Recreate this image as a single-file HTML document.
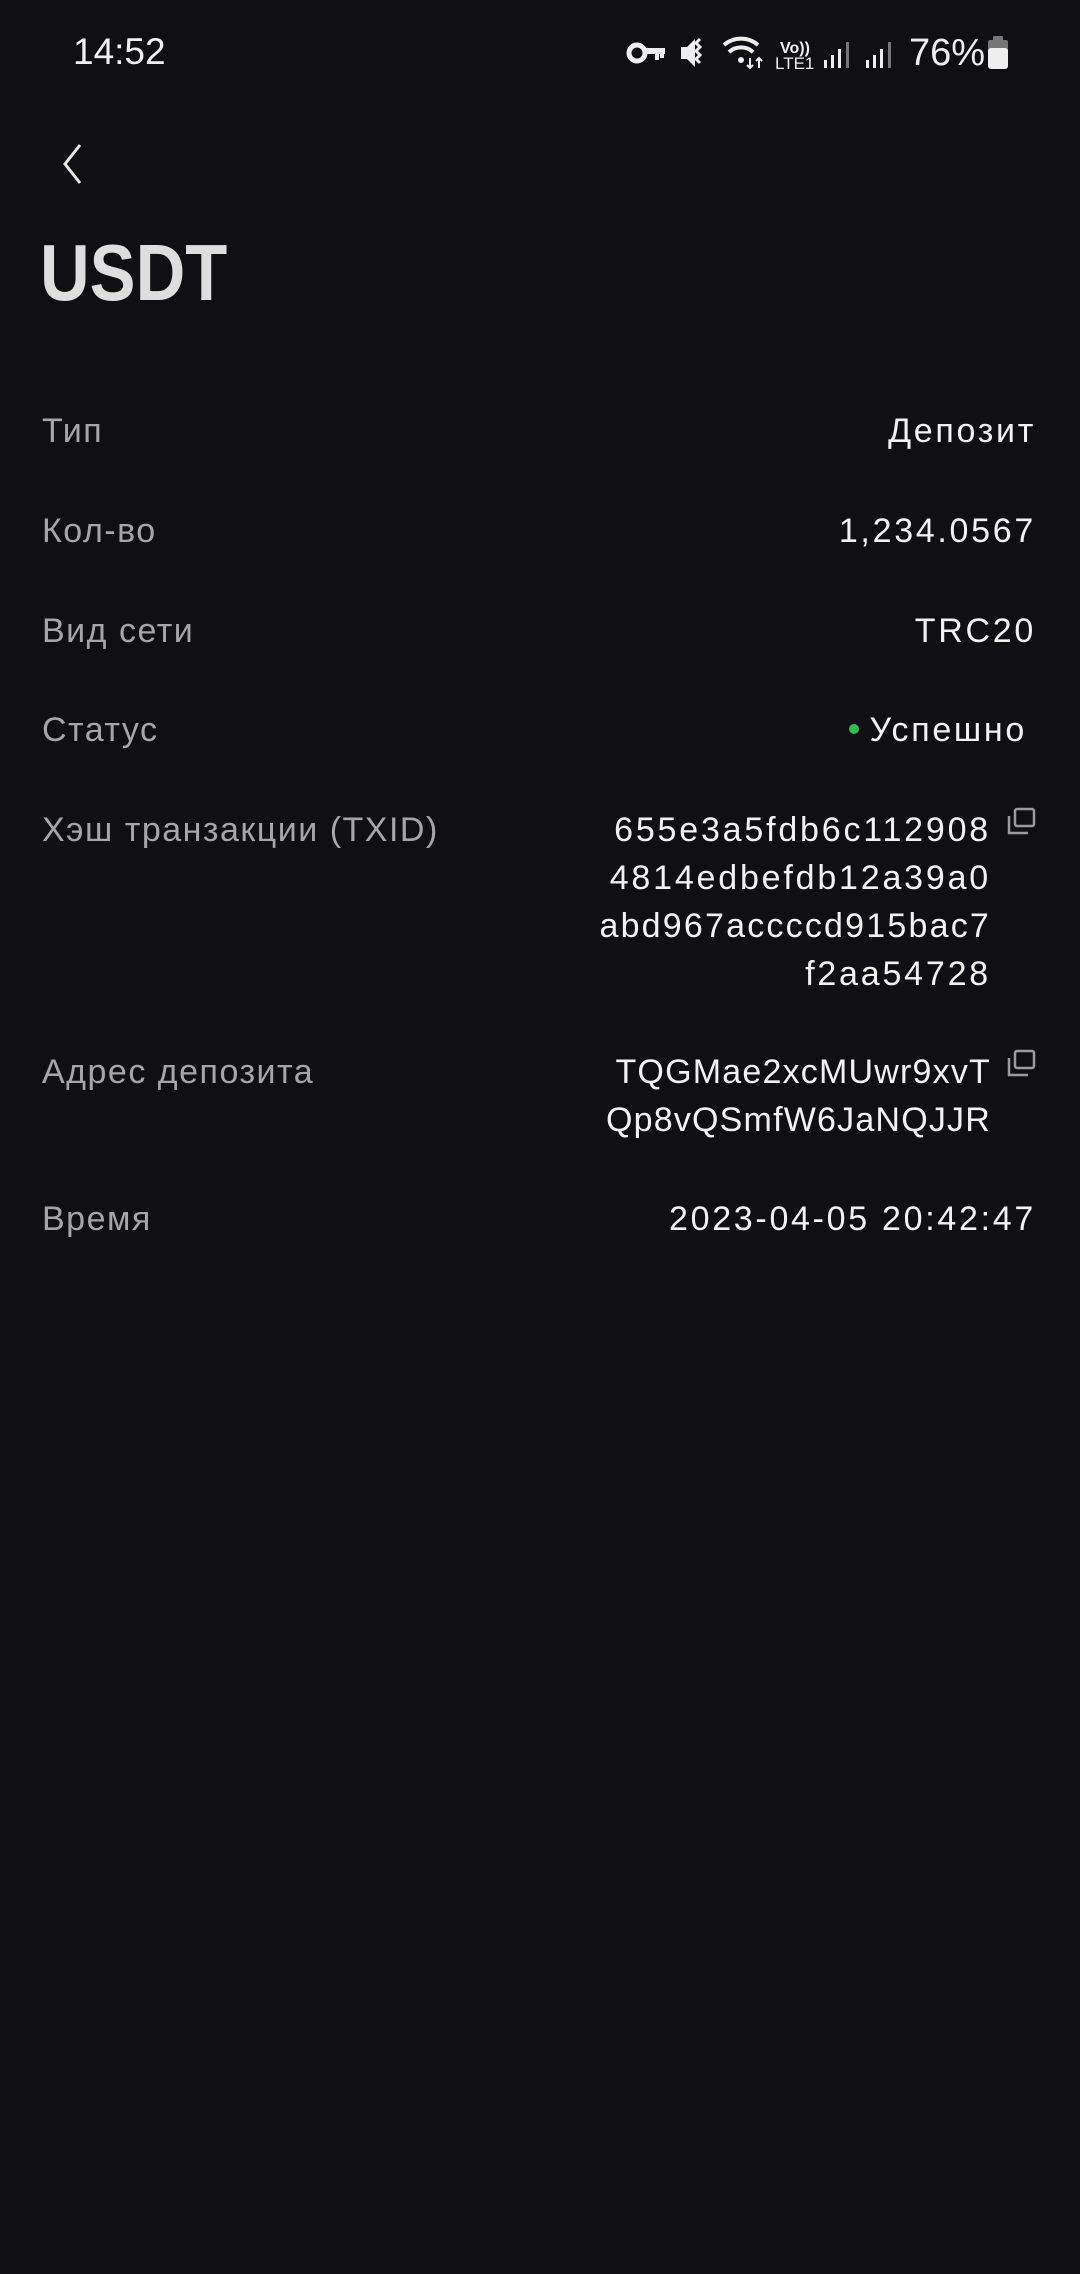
<!DOCTYPE html>
<html><head><meta charset="utf-8"><style>
html,body{margin:0;padding:0;background:#101014;}
body{width:1080px;height:2274px;position:relative;overflow:hidden;font-family:"Liberation Sans",sans-serif;}
.t{position:absolute;font-size:34px;line-height:48px;white-space:nowrap;}
.l{left:42px;color:#a5a5aa;letter-spacing:1.5px;}
.r{right:44px;text-align:right;color:#f2f2f2;letter-spacing:2.7px;}
.h{right:89px;text-align:right;color:#f2f2f2;letter-spacing:2.8px;}
.cp{position:absolute;left:1006px;width:30px;height:30px;}
</style></head><body>
<div class="t" style="left:73px;top:28px;font-size:37px;color:#f0f0f0;">14:52</div>
<svg style="position:absolute;left:620px;top:34px" width="400" height="40" viewBox="620 34 400 40">
 <g fill="#eee">
  <circle cx="637" cy="53" r="8" fill="none" stroke="#eee" stroke-width="5"/>
  <rect x="644" y="48" width="21" height="6"/><rect x="655" y="52" width="4" height="8"/><rect x="660" y="52" width="4" height="6"/>
  <path d="M681 47h6l8-8v28l-8-8h-6z"/>
  <path d="M700 39l-4 4 4 4-4 4 4 4-4 4 4 4" fill="none" stroke="#eee" stroke-width="3"/>
  <path d="M724 45a26 26 0 0 1 34 0" fill="none" stroke="#eee" stroke-width="4"/>
  <path d="M729 52a18 18 0 0 1 24 0" fill="none" stroke="#eee" stroke-width="4"/>
  <circle cx="741" cy="60" r="3"/>
  <path d="M750 58v10M747 65l3 3 3-3M759 68v-10M756 61l3-3 3 3" fill="none" stroke="#eee" stroke-width="2"/>
  <text x="780" y="53" font-size="16" font-family="Liberation Sans" font-weight="bold">Vo))</text>
  <text x="775" y="69" font-size="17" font-family="Liberation Sans">LTE1</text>
  <rect x="824" y="60" width="3" height="8"/><rect x="831" y="55" width="3" height="13"/><rect x="838" y="49" width="3" height="19"/><rect x="846" y="42" width="3" height="26" fill="#777"/>
  <rect x="866" y="60" width="3" height="8"/><rect x="873" y="55" width="3" height="13"/><rect x="880" y="49" width="3" height="19"/><rect x="888" y="42" width="3" height="26" fill="#777"/>
  <text x="909" y="65" font-size="38" font-family="Liberation Sans">76%</text>
  <rect x="993" y="36" width="10" height="6" rx="1" fill="#777"/>
  <rect x="988" y="40" width="20" height="13" rx="2" fill="#777"/>
  <rect x="988" y="48" width="20" height="21" rx="3"/>
 </g>
</svg>
<svg style="position:absolute;left:58px;top:142px" width="30" height="44" viewBox="0 0 30 44"><path d="M22 3L7 22l15 19" fill="none" stroke="#e6e6e6" stroke-width="3"/></svg>
<div class="t" style="left:40px;top:227px;font-size:80px;line-height:92px;font-weight:bold;color:#dedede;transform:scaleX(0.86);transform-origin:left center;">USDT</div>

<div class="t l" style="top:407px">Тип</div><div class="t r" style="top:407px">Депозит</div>
<div class="t l" style="top:507px">Кол-во</div><div class="t r" style="top:507px">1,234.0567</div>
<div class="t l" style="top:607px">Вид сети</div><div class="t r" style="top:607px">TRC20</div>
<div class="t l" style="top:706px">Статус</div>
<div class="t r" style="top:706px;right:53px"><span style="display:inline-block;width:10px;height:10px;border-radius:50%;background:#2ebd55;vertical-align:middle;margin-right:10px;position:relative;top:-3px"></span>Успешно</div>
<div class="t l" style="top:806px">Хэш транзакции (TXID)</div>
<div class="t h" style="top:806px">655e3a5fdb6c112908<br>4814edbefdb12a39a0<br><span style="letter-spacing:2.2px">abd967accccd915bac7</span><br>f2aa54728</div>
<svg class="cp" style="top:807px" viewBox="0 0 30 30"><rect x="9" y="2" width="19" height="17" rx="2" fill="none" stroke="#9a9a9f" stroke-width="2.5"/><path d="M3 9v17h19" fill="none" stroke="#9a9a9f" stroke-width="2.5"/></svg>
<div class="t l" style="top:1048px">Адрес депозита</div>
<div class="t h" style="top:1048px;letter-spacing:1.2px">TQGMae2xcMUwr9xvT<br>Qp8vQSmfW6JaNQJJR</div>
<svg class="cp" style="top:1049px" viewBox="0 0 30 30"><rect x="9" y="2" width="19" height="17" rx="2" fill="none" stroke="#9a9a9f" stroke-width="2.5"/><path d="M3 9v17h19" fill="none" stroke="#9a9a9f" stroke-width="2.5"/></svg>
<div class="t l" style="top:1195px">Время</div><div class="t r" style="top:1195px">2023-04-05 20:42:47</div>
</body></html>
